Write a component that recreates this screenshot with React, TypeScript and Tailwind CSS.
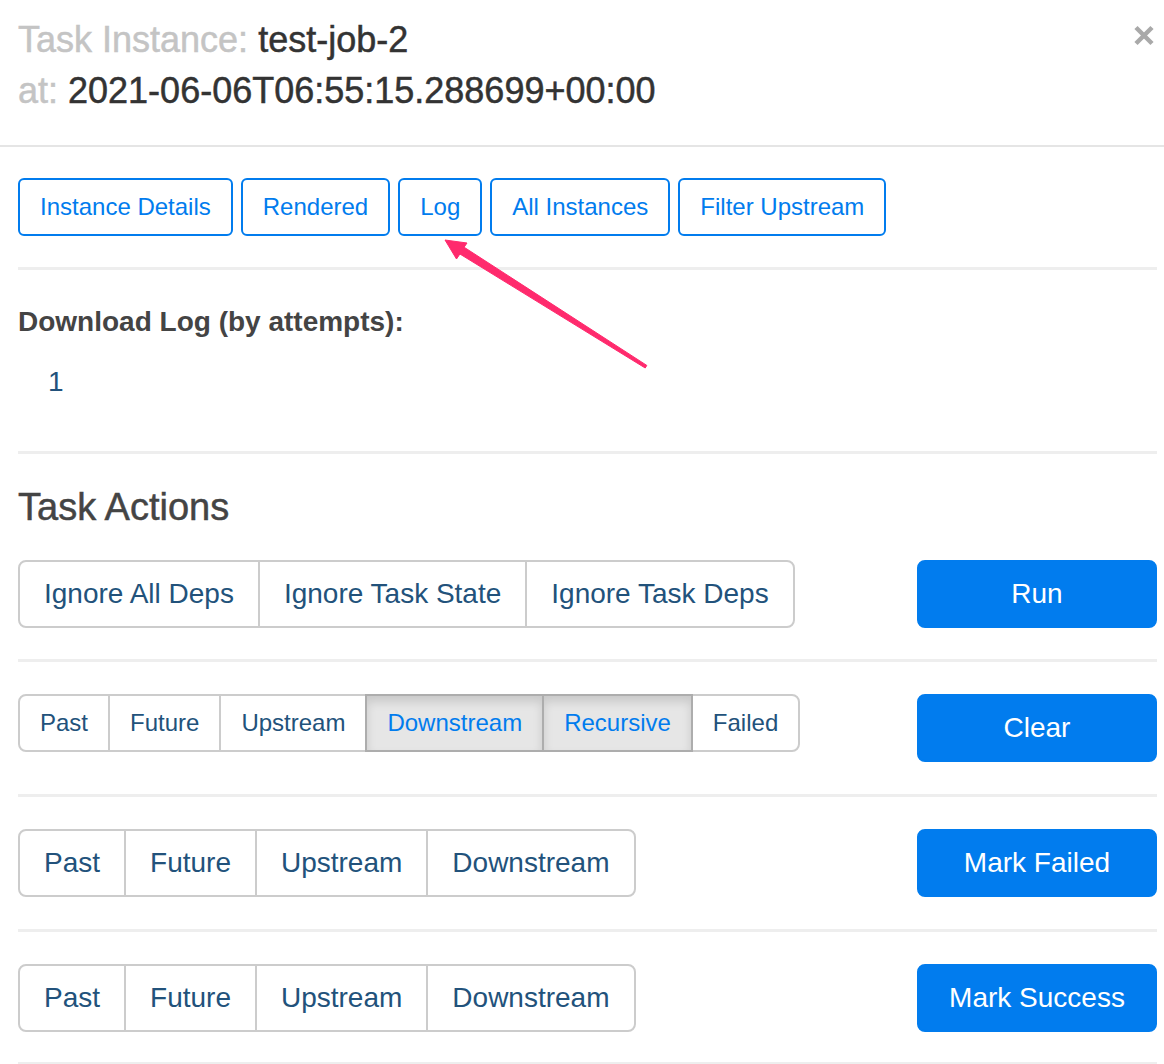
import React from "react";

const font = { fontFamily: '"Liberation Sans", Arial, Helvetica, sans-serif' };

type Opt = { label: string; active?: boolean };

function Group({ items, small }: { items: Opt[]; small?: boolean }) {
  return (
    <div className="flex">
      {items.map((item, i) => (
        <button
          key={item.label}
          className={[
            "relative border-2",
            small
              ? "px-[20px] py-[9px] text-[24px] leading-[36px]"
              : "px-[24px] py-[12px] text-[28px] leading-[40px]",
            i > 0 ? "-ml-[2px]" : "",
            i === 0 ? "rounded-l-[8px]" : "",
            i === items.length - 1 ? "rounded-r-[8px]" : "",
            item.active
              ? "z-10 border-[#adadad] bg-[#e6e6e6] text-[#017cee] shadow-[inset_0_6px_10px_rgba(0,0,0,0.125)]"
              : "border-[#cccccc] bg-white text-[#22527b]",
          ].join(" ")}
        >
          {item.label}
        </button>
      ))}
    </div>
  );
}

function ActionRow({
  items,
  small,
  action,
}: {
  items: Opt[];
  small?: boolean;
  action: string;
}) {
  return (
    <div className="flex items-start justify-between">
      <Group items={items} small={small} />
      <button className="w-[240px] rounded-[8px] border-2 border-[#017cee] bg-[#017cee] py-[12px] text-[28px] leading-[40px] text-white">
        {action}
      </button>
    </div>
  );
}

function Rule({ className = "" }: { className?: string }) {
  return <div className={"h-[3px] bg-[#eeeeee] " + className} />;
}

export default function App() {
  const navTabs = [
    "Instance Details",
    "Rendered",
    "Log",
    "All Instances",
    "Filter Upstream",
  ];

  const fourOpts: Opt[] = [
    { label: "Past" },
    { label: "Future" },
    { label: "Upstream" },
    { label: "Downstream" },
  ];

  return (
    <div className="relative min-h-[1064px] w-[1164px] overflow-hidden bg-white" style={font}>
      {/* header */}
      <div className="relative border-b-2 border-[#e5e5e5] pb-[29px] pl-[18px] pr-[9px] pt-[14px]">
        <div className="text-[36px] leading-[51px] text-[#333333] [-webkit-text-stroke:0.5px]">
          <span className="text-[#c4c4c4]">Task Instance: </span>
          test-job-2
        </div>
        <div className="text-[36px] leading-[51px] text-[#333333] [-webkit-text-stroke:0.5px]">
          <span className="text-[#c4c4c4]">at: </span>
          2021-06-06T06:55:15.288699+00:00
        </div>
        <button className="absolute right-[9px] top-[25px]">
          <svg width="22" height="21" viewBox="0 0 22 21">
            <path
              d="M3 2.5 L19 18.5 M19 2.5 L3 18.5"
              stroke="#a9a9a9"
              strokeWidth="4.5"
              strokeLinecap="butt"
            />
          </svg>
        </button>
      </div>

      {/* body */}
      <div className="pl-[18px] pr-[7px] pt-[31px]">
        <div className="flex gap-[8px]">
          {navTabs.map((t) => (
            <button
              key={t}
              className="rounded-[6px] border-2 border-[#017cee] px-[20px] py-[9px] text-[24px] leading-[36px] text-[#017cee]"
            >
              {t}
            </button>
          ))}
        </div>

        <Rule className="mt-[31px]" />

        <div className="mt-[32px] text-[28px] font-bold leading-[40px] text-[#444444]">
          Download Log (by attempts):
        </div>
        <div className="mt-[20px] pl-[30px] text-[28px] leading-[40px] text-[#22527b]">
          1
        </div>

        <Rule className="mt-[49px]" />

        <h3 className="mt-[33px] text-[38px] leading-[40px] text-[#444444] [-webkit-text-stroke:0.5px]">
          Task Actions
        </h3>

        <div className="mt-[33px]">
          <ActionRow
            items={[
              { label: "Ignore All Deps" },
              { label: "Ignore Task State" },
              { label: "Ignore Task Deps" },
            ]}
            action="Run"
          />
        </div>
        <Rule className="mb-[32px] mt-[31px]" />

        <ActionRow
          small
          items={[
            { label: "Past" },
            { label: "Future" },
            { label: "Upstream" },
            { label: "Downstream", active: true },
            { label: "Recursive", active: true },
            { label: "Failed" },
          ]}
          action="Clear"
        />
        <Rule className="my-[32px]" />

        <ActionRow items={fourOpts} action="Mark Failed" />
        <Rule className="my-[32px]" />

        <ActionRow items={fourOpts} action="Mark Success" />
        <Rule className="mt-[30px]" />
      </div>

      {/* annotation arrow */}
      <svg
        className="pointer-events-none absolute left-0 top-0"
        width="1164"
        height="1064"
        viewBox="0 0 1164 1064"
      >
        <polygon
          points="445,240 467,243 464.1,247.2 646.8,365.4 645.2,368 459.9,254 456.5,259"
          fill="#ff2a6d"
          stroke="#ff2a6d"
          strokeWidth="1"
          strokeLinejoin="round"
        />
      </svg>
    </div>
  );
}
